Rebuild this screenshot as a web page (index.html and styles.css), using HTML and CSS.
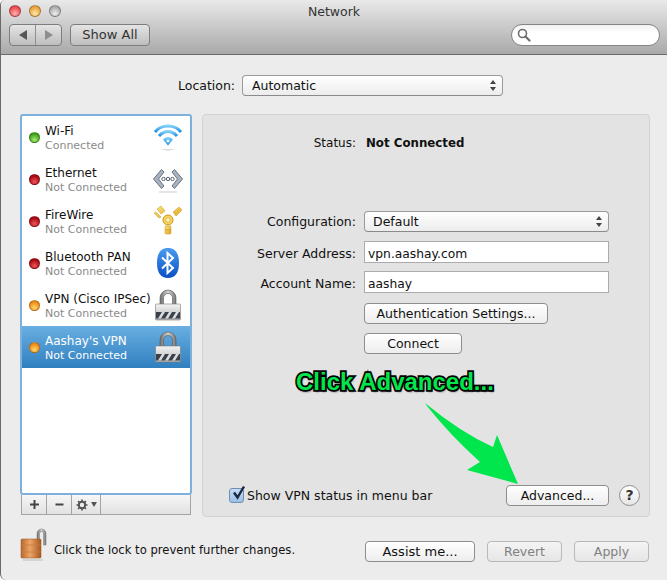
FILE: index.html
```html
<!DOCTYPE html>
<html lang="en">
<head>
    <meta charset="UTF-8">
    <title>Network</title>
    <link rel="stylesheet" href="styles.css">
</head>
<body>
    <svg class="defs" width="0" height="0">
        <defs>
            <linearGradient id="silver" x1="0" y1="0" x2="0" y2="1">
                <stop offset="0" stop-color="#f4f4f4"/>
                <stop offset="1" stop-color="#b4b4b4"/>
            </linearGradient>
            <linearGradient id="shackle" x1="0" y1="0" x2="1" y2="0">
                <stop offset="0" stop-color="#6f6f6f"/>
                <stop offset=".5" stop-color="#cfcfcf"/>
                <stop offset="1" stop-color="#777"/>
            </linearGradient>
            <linearGradient id="wifiblue" x1="0" y1="0" x2="0" y2="1">
                <stop offset="0" stop-color="#7fd0fa"/>
                <stop offset="1" stop-color="#1e8ee0"/>
            </linearGradient>
            <linearGradient id="btblue" x1="0" y1="0" x2="0" y2="1">
                <stop offset="0" stop-color="#4a9cf0"/>
                <stop offset="1" stop-color="#0a4fc4"/>
            </linearGradient>
            <linearGradient id="brass" x1="0" y1="0" x2="1" y2="1">
                <stop offset="0" stop-color="#fbe27c"/>
                <stop offset="1" stop-color="#e0a820"/>
            </linearGradient>
            <linearGradient id="copper" x1="0" y1="0" x2="1" y2="0">
                <stop offset="0" stop-color="#b9692c"/>
                <stop offset=".45" stop-color="#eda467"/>
                <stop offset="1" stop-color="#a9581f"/>
            </linearGradient>
            <symbol id="vpnlock" viewBox="0 0 30 34">
                <path d="M7 17V10a8 8 0 0 1 16 0v7h-3.500V10a4.500 4.500 0 0 0-9 0v7z" fill="url(#shackle)" stroke="#555" stroke-width=".6"/>
                <rect x="2.500" y="16" width="25" height="16" rx="1" fill="url(#silver)" stroke="#777" stroke-width=".6"/>
                <rect x="3" y="24" width="24" height="6.500" fill="#3c4148"/>
                <path d="M5 30.500l4-6.500h3l-4 6.500zM12 30.500l4-6.500h3l-4 6.500zM19 30.500l4-6.500h3l-4 6.500z" fill="#d9dce0"/>
            </symbol>
        </defs>
    </svg>

    <div class="window">
        <div class="toolbar">
            <div class="lights">
                <span class="light red"></span>
                <span class="light amber"></span>
                <span class="light off"></span>
            </div>
            <div class="title">Network</div>
            <div class="tools">
                <div class="nav">
                    <span class="nav-cell"><span class="tri-left"></span></span>
                    <span class="nav-cell"><span class="tri-right"></span></span>
                </div>
                <div class="showall">Show All</div>
                <div class="search">
                    <svg width="14" height="14" viewBox="0 0 14 14"><circle cx="5.500" cy="5.500" r="4" fill="none" stroke="#6e6e6e" stroke-width="1.600"/><path d="M8.500 8.500l4 4" stroke="#6e6e6e" stroke-width="2.200" stroke-linecap="round"/></svg>
                </div>
            </div>
        </div>

        <div class="content">
            <div class="location">
                <span class="location-label">Location:</span>
                <div class="select location-select">Automatic<span class="updown"></span></div>
            </div>

            <div class="columns">
                <div class="side">
                    <ul class="services">
                        <li class="service">
                            <span class="dot green"></span>
                            <div class="names"><div class="name">Wi-Fi</div><div class="sub">Connected</div></div>
                            <svg class="icon" width="32" height="32" viewBox="0 0 32 32">
                                <path d="M3 11C9 3 23 3 29 11" fill="none" stroke="url(#wifiblue)" stroke-width="3"/>
                                <path d="M7 15C12 9 20 9 25 15" fill="none" stroke="url(#wifiblue)" stroke-width="3"/>
                                <path d="M11 18.500c3-3.500 7-3.500 10 0l-5 6z" fill="url(#wifiblue)"/>
                                <circle cx="16" cy="20" r="1.500" fill="#e8f6ff"/>
                                <path d="M8 28h16l-8 2z" fill="#ddd"/>
                            </svg>
                        </li>
                        <li class="service">
                            <span class="dot red"></span>
                            <div class="names"><div class="name">Ethernet</div><div class="sub">Not Connected</div></div>
                            <svg class="icon" width="32" height="32" viewBox="0 0 32 32">
                                <path d="M9.500 6.500L1.500 16l8 9.500 2.500-2.500L6.500 16l5.500-7z" fill="#a9b3c0" stroke="#4f5966" stroke-width=".8"/>
                                <path d="M22.500 6.500l8 9.500-8 9.500-2.500-2.500 5.500-7-5.500-7z" fill="#a9b3c0" stroke="#4f5966" stroke-width=".8"/>
                                <circle cx="11.500" cy="16" r="1.700" fill="#fff" stroke="#56606d"/>
                                <circle cx="16" cy="16" r="1.700" fill="#fff" stroke="#56606d"/>
                                <circle cx="20.500" cy="16" r="1.700" fill="#fff" stroke="#56606d"/>
                                <path d="M7 29h18" stroke="#ddd" stroke-width="1.500"/>
                            </svg>
                        </li>
                        <li class="service">
                            <span class="dot red"></span>
                            <div class="names"><div class="name">FireWire</div><div class="sub">Not Connected</div></div>
                            <svg class="icon" width="32" height="32" viewBox="0 0 32 32">
                                <path d="M5 4l4-3 4 5-4 3zM21 7l6-5 3 3-6 6zM2 8l2-1 5 5-2 1z" fill="url(#brass)" stroke="#c8961c" stroke-width=".5"/>
                                <circle cx="16" cy="15" r="5" fill="#f7d660" stroke="#c8961c"/>
                                <circle cx="16" cy="15" r="2.200" fill="#fff6cf" stroke="#c8961c" stroke-width=".6"/>
                                <rect x="13" y="21" width="6" height="8" rx="1" fill="url(#brass)" stroke="#c8961c" stroke-width=".5"/>
                                <path d="M13 25h6" stroke="#c8961c" stroke-width=".7"/>
                            </svg>
                        </li>
                        <li class="service">
                            <span class="dot red"></span>
                            <div class="names"><div class="name">Bluetooth PAN</div><div class="sub">Not Connected</div></div>
                            <svg class="icon" width="32" height="32" viewBox="0 0 32 32">
                                <path d="M16 1c7 0 11 5 11 15s-4 15-11 15S5 26 5 16 9 1 16 1z" fill="url(#btblue)"/>
                                <path d="M10 10.500l11 10.500-5.500 5V6l5.500 5-11 10.500" fill="none" stroke="#fff" stroke-width="2"/>
                            </svg>
                        </li>
                        <li class="service">
                            <span class="dot amber"></span>
                            <div class="names"><div class="name">VPN (Cisco IPSec)</div><div class="sub">Not Connected</div></div>
                            <svg class="icon" width="32" height="34"><use href="#vpnlock"/></svg>
                        </li>
                        <li class="service selected">
                            <span class="dot amber"></span>
                            <div class="names"><div class="name">Aashay's VPN</div><div class="sub">Not Connected</div></div>
                            <svg class="icon" width="32" height="34"><use href="#vpnlock"/></svg>
                        </li>
                    </ul>
                    <div class="list-tools">
                        <span class="list-tool">
                            <svg width="11" height="11" viewBox="0 0 11 11"><path d="M5.500 1v9M1 5.500h9" stroke="#444" stroke-width="2"/></svg>
                        </span>
                        <span class="list-tool">
                            <svg width="11" height="11" viewBox="0 0 11 11"><path d="M1.500 5.500h8" stroke="#444" stroke-width="2"/></svg>
                        </span>
                        <span class="list-tool gear">
                            <svg width="12" height="12" viewBox="0 0 12 12"><circle cx="6" cy="6" r="3.200" fill="none" stroke="#555" stroke-width="2"/><path d="M6 .5v2.500M6 9v2.500M.5 6H3M9 6h2.500M2.100 2.100l1.800 1.800M8.100 8.100l1.800 1.800M9.900 2.100L8.100 3.900M3.900 8.100L2.100 9.900" stroke="#555" stroke-width="1.700"/></svg>
                            <span class="tri-down"></span>
                        </span>
                    </div>
                </div>

                <div class="panel">
                    <div class="form">
                        <div class="label label-status">Status:</div>
                        <div class="status">Not Connected</div>

                        <div class="label label-config row-config">Configuration:</div>
                        <div class="select config-select row-config">Default<span class="updown"></span></div>

                        <div class="label row-server">Server Address:</div>
                        <div class="field row-server">vpn.aashay.com</div>

                        <div class="label">Account Name:</div>
                        <div class="field">aashay</div>

                        <div class="button auth">Authentication Settings...</div>
                        <div class="button connect">Connect</div>
                    </div>

                    <div class="panel-bottom">
                        <label class="check">
                            <span class="checkbox">
                                <svg width="17" height="17" viewBox="0 0 17 17"><path d="M4 7.500l3.500 5L14 1.500" fill="none" stroke="#1c2a44" stroke-width="2.400"/></svg>
                            </span>
                            Show VPN status in menu bar
                        </label>
                        <div class="button advanced">Advanced...</div>
                        <div class="help">?</div>
                    </div>
                </div>
            </div>

            <div class="footer">
                <svg class="lock" width="28" height="36" viewBox="0 0 28 36">
                    <path d="M17 16V6.500a4.500 4.500 0 0 1 9 0V18h-2.500V6.500a2 2 0 0 0-4 0V16z" fill="url(#shackle)" stroke="#777" stroke-width=".5"/>
                    <rect x="1" y="12" width="20" height="19" rx="1" fill="url(#copper)" stroke="#96501d" stroke-width=".5"/>
                    <path d="M1 18h20M1 25h20" stroke="#c47c3c" stroke-width=".7"/>
                    <path d="M3 33h20" stroke="#ccc" stroke-width="1.500"/>
                </svg>
                <span class="lock-text">Click the lock to prevent further changes.</span>
                <div class="footer-buttons">
                    <div class="button assist">Assist me...</div>
                    <div class="button disabled revert">Revert</div>
                    <div class="button disabled apply">Apply</div>
                </div>
            </div>
        </div>

        <!-- callout drawn on top of the screenshot -->
        <div class="callout">Click Advanced...</div>
        <svg class="callout-arrow" width="100" height="90" viewBox="0 0 100 90">
            <path d="M5 3Q40 32 73 47L77 35 98 84 47 70 60 62Q30 35 7 6z" fill="#00e64c"/>
        </svg>
    </div>
</body>
</html>
```

FILE: styles.css
```css
*{
    box-sizing: border-box;
}
body{
    margin: 0;
    background: #fff;
    font-family: "DejaVu Sans", sans-serif;
    font-size: 12.5px;
    color: #111;
}
.defs{
    position: absolute;
}
.window{
    position: relative;
    width: 667px;
    height: 580px;
    background: #ececec;
    border-left: 1px solid #6a6a6a;
    border-radius: 5px 0 0 6px;
    overflow: hidden;
}

/* title bar + toolbar */
.toolbar{
    position: relative;
    height: 55px;
    background: linear-gradient(#e9e9e9, #a9a9a9);
    border-bottom: 1px solid #6b6b6b;
}
.lights{
    position: absolute;
    left: 8px;
    top: 5px;
    display: flex;
    gap: 8px;
}
.light{
    width: 12px;
    height: 12px;
    border-radius: 50%;
    border: 1px solid rgba(0,0,0,.3);
}
.light.red{
    background: radial-gradient(circle at 50% 75%, #ffb0ac, #ea4a50 70%);
}
.light.amber{
    background: radial-gradient(circle at 50% 75%, #ffe8a8, #e9a23c 70%);
}
.light.off{
    background: radial-gradient(circle at 50% 75%, #eee, #acacac 70%);
}
.title{
    padding-top: 4px;
    text-align: center;
    line-height: 15px;
    color: #333;
}
.tools{
    display: flex;
    align-items: center;
    padding: 5px 7px 0 8px;
}
.nav{
    display: flex;
    width: 53px;
    height: 22px;
    border: 1px solid #7d7d7d;
    border-radius: 4px;
    background: linear-gradient(#e4e4e4, #bebebe);
}
.nav-cell{
    flex: 1;
    display: flex;
    align-items: center;
    justify-content: center;
}
.nav-cell + .nav-cell{
    border-left: 1px solid #8f8f8f;
}
.tri-left{
    border: 5px solid transparent;
    border-left-width: 0;
    border-right: 8px solid #555;
}
.tri-right{
    border: 5px solid transparent;
    border-right-width: 0;
    border-left: 8px solid #8d8d8d;
}
.showall{
    width: 80px;
    height: 22px;
    margin-left: 8px;
    border: 1px solid #7d7d7d;
    border-radius: 4px;
    background: linear-gradient(#e4e4e4, #bebebe);
    text-align: center;
    font-size: 13px;
    line-height: 20px;
    color: #333;
}
.search{
    display: flex;
    align-items: center;
    width: 149px;
    height: 22px;
    margin-left: auto;
    padding-left: 5px;
    border: 1px solid #858585;
    border-radius: 11px;
    background: linear-gradient(#f2f2f2, #fff 40%);
}

/* main area */
.content{
    padding: 20px 17px 0 19px;
}
.location{
    display: flex;
    align-items: center;
    height: 21px;
    padding-left: 158px;
}
.location-label{
    width: 64px;
}
.select{
    position: relative;
    height: 21px;
    padding-left: 9px;
    line-height: 20px;
    border: 1px solid #9a9a9a;
    border-bottom-color: #8a8a8a;
    border-radius: 4px;
    background: linear-gradient(#fff, #ececec);
}
.location-select{
    width: 261px;
}
.config-select{
    padding-left: 8px;
}
.updown{
    position: absolute;
    right: 5px;
    top: 4px;
    width: 7px;
    height: 11px;
}
.updown:before,
.updown:after{
    content: "";
    position: absolute;
    left: 0;
    border: 3.500px solid transparent;
}
.updown:before{
    top: 0;
    border-bottom: 4px solid #444;
    border-top-width: 0;
}
.updown:after{
    bottom: 0;
    border-top: 4px solid #444;
    border-bottom-width: 0;
}
.columns{
    display: flex;
    gap: 10px;
    margin-top: 18px;
}
.side{
    flex: none;
    width: 172px;
}
.services{
    list-style: none;
    margin: 0;
    padding: 0;
    height: 381px;
    background: #fff;
    border: 2px solid #7eb0dc;
    border-radius: 3px;
}
.service{
    display: flex;
    align-items: center;
    height: 42px;
    padding: 0 6px 0 7px;
}
.dot{
    flex: none;
    width: 11px;
    height: 11px;
    border-radius: 50%;
    border: 1px solid rgba(0,0,0,.25);
}
.dot.green{
    background: radial-gradient(circle at 50% 75%, #a6ec70, #3fa01a 70%);
}
.dot.red{
    background: radial-gradient(circle at 50% 75%, #f0555a, #a80a12 70%);
}
.dot.amber{
    background: radial-gradient(circle at 50% 75%, #ffd66a, #f08a16 70%);
}
.names{
    flex: 1;
    min-width: 0;
    padding: 2px 0 0 5px;
    white-space: nowrap;
}
.name{
    font-size: 12px;
    line-height: 15px;
}
.sub{
    font-size: 11px;
    line-height: 14px;
    color: #8a8a8a;
}
.icon{
    flex: none;
}
.service.selected{
    background: linear-gradient(#69afe2, #2f7fbf);
    color: #fff;
}
.service.selected .sub{
    color: #fff;
}
.list-tools{
    display: flex;
    height: 20px;
    margin: 0 1px;
    border: 1px solid #a4a4a4;
    border-top: 0;
    background: linear-gradient(#f6f6f6, #e2e2e2);
}
.list-tool{
    display: flex;
    align-items: center;
    justify-content: center;
    width: 25px;
    border-right: 1px solid #a4a4a4;
}
.gear{
    width: 29px;
    gap: 3px;
}
.tri-down{
    border: 3.500px solid transparent;
    border-bottom-width: 0;
    border-top: 5px solid #555;
}

/* right panel */
.panel{
    display: flex;
    flex-direction: column;
    justify-content: space-between;
    flex: none;
    width: 448px;
    height: 403px;
    background: #e3e3e3;
    border: 1px solid #d2d2d2;
    border-radius: 4px;
}
.form{
    display: grid;
    grid-template-columns: 153px 245px;
    column-gap: 8px;
    row-gap: 8px;
    align-items: center;
    padding-top: 17px;
}
.label{
    text-align: right;
    padding-top: 3px;
}
.label-config{
    padding-top: 0;
}
.label-status{
    font-size: 12px;
    padding-top: 1px;
}
.status{
    height: 21px;
    padding-left: 2px;
    line-height: 23px;
    font-size: 11.8px;
    font-weight: bold;
}
.row-config{
    margin-top: 50px;
}
.row-server{
    margin-top: 1px;
}
.field{
    height: 22px;
    padding-left: 3px;
    line-height: 24px;
    font-size: 12.3px;
    background: #fff;
    border: 1px solid #ababab;
}
.button{
    height: 21px;
    text-align: center;
    line-height: 20px;
    border: 1px solid #8e8e8e;
    border-radius: 4px;
    background: linear-gradient(#fff, #ededed);
}
.auth{
    grid-column: 2;
    width: 184px;
    margin-top: 2px;
}
.connect{
    grid-column: 2;
    width: 98px;
    margin-top: 1px;
}
.panel-bottom{
    display: flex;
    align-items: center;
    padding: 0 9px 10px 26px;
}
.check{
    display: flex;
    align-items: center;
    gap: 3px;
}
.checkbox{
    width: 15px;
    height: 15px;
    border: 1px solid #6f8fb4;
    border-radius: 3px;
    background: linear-gradient(#c5dcf4, #9cc0e6);
}
.checkbox svg{
    display: block;
    margin: -4px 0 0 0;
}
.advanced{
    width: 103px;
    margin-left: auto;
}
.help{
    width: 21px;
    height: 21px;
    margin-left: 10px;
    border: 1px solid #8e8e8e;
    border-radius: 50%;
    background: linear-gradient(#fff, #e6e6e6);
    text-align: center;
    line-height: 19px;
    font-weight: bold;
    font-size: 14px;
    color: #333;
}

/* footer */
.footer{
    display: flex;
    align-items: center;
    height: 47px;
    margin: 6px 1px 0 0;
}
.lock{
    flex: none;
    margin-top: -4px;
}
.lock-text{
    margin-left: 6px;
    margin-top: 7px;
    font-size: 11.6px;
}
.footer-buttons{
    display: flex;
    gap: 12px;
    margin-left: auto;
    margin-top: 9px;
}
.assist{
    width: 110px;
    font-size: 13px;
}
.revert,
.apply{
    width: 75px;
}
.disabled{
    color: #808080;
    border-color: #b8b8b8;
    background: linear-gradient(#f4f4f4, #e6e6e6);
}

/* annotation on top of the window */
.callout{
    position: absolute;
    left: 295px;
    top: 367px;
    font-family: "Liberation Sans", sans-serif;
    font-size: 24px;
    font-weight: bold;
    line-height: 30px;
    white-space: nowrap;
    color: #00e64c;
    -webkit-text-stroke: 3.5px #000;
    paint-order: stroke fill;
    text-shadow: 1px 2px 2px rgba(0,0,0,.6);
}
.callout-arrow{
    position: absolute;
    left: 419px;
    top: 400px;
}
```
